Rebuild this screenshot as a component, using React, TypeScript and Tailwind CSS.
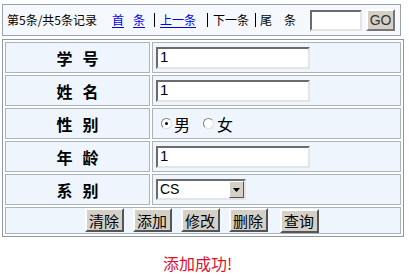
import React from "react";

const font = { fontFamily: '"SimSun", "Noto Sans CJK SC", sans-serif' };

function TextBox({ value, className }: { value: string; className: string }) {
  return (
    <div
      className={`h-[22px] bg-white border-2 border-t-[#6b6b6b] border-l-[#6b6b6b] border-r-[#e4e4e4] border-b-[#e4e4e4] flex items-center pl-[2px] text-[15px] text-black ${className}`}
      style={{ fontFamily: '"Liberation Sans", sans-serif' }}
    >
      {value}
    </div>
  );
}

function Radio({ checked }: { checked?: boolean }) {
  return (
    <span className="w-[11px] h-[11px] rounded-full bg-white border border-t-[#808080] border-l-[#808080] border-r-[#e0e0e0] border-b-[#e0e0e0] flex items-center justify-center">
      {checked && <span className="w-[3px] h-[3px] rounded-full bg-black" />}
    </span>
  );
}

function Btn({ label }: { label: string }) {
  return (
    <button className="w-[39px] h-[24px] bg-[#d4d0c8] border-2 border-t-white border-l-white border-r-[#555] border-b-[#555] text-[15px] leading-none text-black">
      {label}
    </button>
  );
}

function Row({ label, children }: { label: string; children: React.ReactNode }) {
  return (
    <tr className="h-[31px]">
      <td className="w-[145px] border border-[#aab4bf] bg-[#eef5fd] text-center font-bold text-[16px] tracking-[10px] pl-[10px] text-black">
        {label}
      </td>
      <td className="border border-[#aab4bf] bg-[#eef5fd] px-[3px]">{children}</td>
    </tr>
  );
}

export default function App() {
  return (
    <div className="w-[409px] h-[276px] bg-white" style={font}>
      <div className="pt-[4px] pl-[2px]">
        <div className="w-[399px] h-[32px] border border-[#9aa3ad] bg-[#f5f9fd] flex items-center pl-[4px] text-[12px] text-black">
          <span className="w-[94px]">第5条/共5条记录</span>
          <a className="ml-[11px] w-[33px] flex justify-between text-[#0000ee] underline underline-offset-2">
            <span>首</span>
            <span>条</span>
          </a>
          <span className="ml-[9px] w-[1px] h-[14px] bg-black" />
          <a className="ml-[5px] text-[#0000ee] underline underline-offset-2">上一条</a>
          <span className="ml-[11px] w-[1px] h-[14px] bg-black" />
          <span className="ml-[5px]">下一条</span>
          <span className="ml-[6px] w-[1px] h-[14px] bg-black" />
          <span className="ml-[4px] w-[36px] flex justify-between">
            <span>尾</span>
            <span>条</span>
          </span>
          <div className="ml-[14px] w-[52px] h-[21px] bg-white border-2 border-t-[#6b6b6b] border-l-[#6b6b6b] border-r-[#e4e4e4] border-b-[#e4e4e4]" />
          <button
            className="ml-[4px] w-[29px] h-[22px] bg-[#d4d0c8] border-2 border-t-white border-l-white border-r-[#777] border-b-[#777] text-[14px] leading-none text-[#333]"
            style={{ fontFamily: '"Liberation Sans", sans-serif' }}
          >
            GO
          </button>
        </div>
      </div>

      <div className="pt-[3px] pl-[2px]">
        <table className="w-[402px] border border-[#8e969e] border-separate border-spacing-[2px] bg-white">
          <tbody>
            <Row label="学号">
              <TextBox value="1" className="w-[154px]" />
            </Row>
            <Row label="姓名">
              <TextBox value="1" className="w-[154px]" />
            </Row>
            <Row label="性别">
              <div className="flex items-center text-[16px] text-black pl-[5px]">
                <Radio checked />
                <span className="ml-[2px]">男</span>
                <span className="ml-[13px]"><Radio /></span>
                <span className="ml-[3px]">女</span>
              </div>
            </Row>
            <Row label="年龄">
              <TextBox value="1" className="w-[154px]" />
            </Row>
            <Row label="系别">
              <div
                className="w-[90px] h-[21px] bg-white border-2 border-t-[#6b6b6b] border-l-[#6b6b6b] border-r-[#e4e4e4] border-b-[#e4e4e4] flex items-center justify-between text-[14px] text-black"
                style={{ fontFamily: '"Liberation Sans", sans-serif' }}
              >
                <span className="pl-[2px]">CS</span>
                <span className="w-[15px] h-[17px] bg-[#d4d0c8] border border-t-white border-l-white border-r-[#555] border-b-[#555] flex items-center justify-center">
                  <svg width="7" height="4" viewBox="0 0 7 4">
                    <path d="M0 0h7L3.5 4z" fill="#000" />
                  </svg>
                </span>
              </div>
            </Row>
            <tr className="h-[26px]">
              <td colSpan={2} className="border border-[#aab4bf] bg-[#eef5fd] p-0">
                <div className="flex justify-center gap-[9px] pr-[3px]">
                  <Btn label="清除" />
                  <Btn label="添加" />
                  <Btn label="修改" />
                  <Btn label="删除" />
                  <span className="ml-[3px]">
                    <Btn label="查询" />
                  </span>
                </div>
              </td>
            </tr>
          </tbody>
        </table>
      </div>

      <div className="mt-[14px] text-center text-[16px] text-[#e0102b] pr-[14px]">添加成功!</div>
    </div>
  );
}
